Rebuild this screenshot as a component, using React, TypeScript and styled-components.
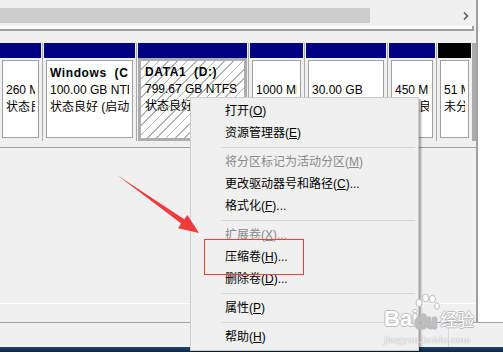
import React from "react";
import styled, { createGlobalStyle } from "styled-components";

const Global = createGlobalStyle`
  html, body { margin: 0; padding: 0; background: #f0f0f0; overflow: hidden; }
  body {
    font-family: "Liberation Sans", "Noto Sans CJK SC", sans-serif;
    font-size: 12px;
    color: #000;
  }
  * { box-sizing: border-box; }
`;

const Screen = styled.div`
  position: relative;
  width: 503px;
  height: 352px;
  overflow: hidden;
  display: flex;
  flex-direction: column;
  background: #f0f0f0;
`;

const Workspace = styled.div`
  display: flex;
  height: 322px;
`;

const DiskPane = styled.div`
  width: 476px;
  display: flex;
  flex-direction: column;
`;

const PaneDivider = styled.div`
  width: 2px;
  background: #a0a0a0;
`;

const WhitePane = styled.div`
  flex: 1;
  background: #ffffff;
`;

const ScrollTrack = styled.div`
  height: 26px;
  display: flex;
  align-items: flex-start;
  padding-top: 8px;
  background: #f0f0f0;
`;

const Thumb = styled.div`
  width: 370px;
  height: 15px;
  background: #cdcdcd;
`;

const Spacer = styled.div`
  flex: 1;
`;

const ArrowBox = styled.div`
  width: 6px;
  height: 8px;
  margin-top: 4px;
  margin-right: 7px;
  display: flex;
`;

const FrameEdge = styled.div`
  height: 5px;
  margin-right: 2px;
  background: #fafafa;
  border-bottom: 2px solid #a0a0a0;
  border-right: 2px solid #a0a0a0;
`;

const TopGap = styled.div`
  height: 12px;
`;

const PartitionRow = styled.div`
  display: flex;
  gap: 1px;
  height: 98px;
  margin-left: -1px;
  background: #ababab;
`;

const Partition = styled.div<{ $w: number }>`
  width: ${(p) => p.$w}px;
  display: flex;
  flex-direction: column;
  border-left: 1px solid #f0f0f0;
  border-right: 1px solid #f0f0f0;
  background: #f0f0f0;
`;

const PartHead = styled.div<{ $color: string }>`
  height: 15px;
  background: ${(p) => p.$color};
`;

const PartBody = styled.div<{ $selected?: boolean }>`
  flex: 1;
  display: flex;
  min-width: 0;
  padding: ${(p) => (p.$selected ? "0" : "2px 2px 3px 2px")};
  background: #f0f0f0;
`;

const PartBox = styled.div<{ $selected?: boolean }>`
  flex: 1;
  min-width: 0;
  overflow: hidden;
  background: ${(p) =>
    p.$selected
      ? "repeating-linear-gradient(135deg, #ffffff 0 5.5px, #b4b4b4 5.5px 6.6px)"
      : "#ffffff"};
  border: ${(p) => (p.$selected ? "3px solid #adadad" : "1px solid #a0a0a0")};
  padding: ${(p) => (p.$selected ? "3px 4px" : "4px 3px")};
`;

const PartLine = styled.div<{ $bold?: boolean }>`
  height: 17px;
  line-height: 17px;
  white-space: pre;
  overflow: hidden;
  font-weight: ${(p) => (p.$bold ? 700 : 400)};
  letter-spacing: ${(p) => (p.$bold ? "0.6px" : "0")};
`;

const LowerPane = styled.div`
  margin-top: 6px;
  flex: 1;
  border-top: 1px solid #a0a0a0;
  border-bottom: 1px solid #ffffff;
`;

const BottomStrip = styled.div`
  height: 18px;
`;

const StatusBar = styled.div`
  height: 25px;
  display: flex;
  border-top: 1px solid #a0a0a0;
  background: #f0f0f0;
`;

const StatusCell = styled.div`
  width: 449px;
  border-right: 1px solid #d6d6d6;
`;

const Taskbar = styled.div`
  height: 5px;
  background: linear-gradient(#1d4674, #0c2544);
`;

const Menu = styled.div`
  position: absolute;
  left: 190px;
  top: 97px;
  width: 229px;
  padding: 2px;
  background: #f0f0f0;
  border: 1px solid #cccccc;
  box-shadow: 2px 2px 2px rgba(0, 0, 0, 0.35);
`;

const MenuItem = styled.div<{ $disabled?: boolean }>`
  height: 22px;
  line-height: 22px;
  padding-left: 32px;
  color: ${(p) => (p.$disabled ? "#8a8a8a" : "#000")};
  white-space: nowrap;
  u { text-underline-offset: 1px; }
`;

const MenuSep = styled.div`
  height: 1px;
  margin: 3px 1px 3px 28px;
  background: #d7d7d7;
`;

const Highlight = styled.div`
  position: absolute;
  left: 204px;
  top: 239px;
  width: 100px;
  height: 36px;
  border: 1px solid #f03c3c;
  pointer-events: none;
`;

const PointerArrow = styled.svg`
  position: absolute;
  left: 0;
  top: 0;
  pointer-events: none;
`;

const Watermark = styled.div`
  position: absolute;
  left: 384px;
  top: 288px;
  display: flex;
  flex-direction: column;
  align-items: flex-start;
  white-space: nowrap;
  color: #ffffff;
  text-shadow: 1px 0 0 #bdbdbd, -1px 0 0 #bdbdbd, 0 1px 0 #bdbdbd, 0 -1px 0 #bdbdbd;
  pointer-events: none;
`;

const MarkRow = styled.div`
  display: flex;
  align-items: flex-end;
  height: 44px;
`;

const MarkBig = styled.span`
  font-family: "Liberation Sans", sans-serif;
  font-size: 22px;
  font-weight: 700;
  line-height: 26px;
`;

const Paw = styled.svg`
  margin-left: -4px;
  flex: none;
`;

const MarkCn = styled.span`
  font-family: "Noto Sans CJK SC", sans-serif;
  font-size: 17px;
  line-height: 26px;
`;

const MarkUrl = styled.span`
  font-family: "Liberation Serif", serif;
  font-size: 11px;
  line-height: 13px;
  letter-spacing: 0.3px;
  margin-top: 1px;
  text-shadow: 0 0 1px #a8a8a8, 0 0 1px #a8a8a8;
`;

type Part = { w: number; color: string; lines: string[]; selected?: boolean; bold?: boolean };

const parts: Part[] = [
  { w: 43, color: "#000080", lines: ["", "260 MB", "状态良好 (EFI 系统分区)"] },
  { w: 93, color: "#000080", lines: ["Windows  (C:)", "100.00 GB NTFS", "状态良好 (启动, 页面文件)"], bold: true },
  { w: 111, color: "#000080", lines: ["DATA1  (D:)", "799.67 GB NTFS", "状态良好 (主分区)"], bold: true, selected: true },
  { w: 55, color: "#000080", lines: ["", "1000 MB", "状态良好 (恢复分区)"] },
  { w: 82, color: "#000080", lines: ["", "30.00 GB", "状态良好 (主分区)"] },
  { w: 48, color: "#000080", lines: ["", "450 MB", "状态良好 (恢复分区)"] },
  { w: 35, color: "#000000", lines: ["", "51 MB", "未分配"] },
];

type Item = { label: string; key: string; tail?: string; disabled?: boolean } | "sep";

const items: Item[] = [
  { label: "打开", key: "O" },
  { label: "资源管理器", key: "E" },
  "sep",
  { label: "将分区标记为活动分区", key: "M", disabled: true },
  { label: "更改驱动器号和路径", key: "C", tail: "..." },
  { label: "格式化", key: "F", tail: "..." },
  "sep",
  { label: "扩展卷", key: "X", tail: "...", disabled: true },
  { label: "压缩卷", key: "H", tail: "..." },
  { label: "删除卷", key: "D", tail: "..." },
  "sep",
  { label: "属性", key: "P" },
  "sep",
  { label: "帮助", key: "H" },
];

export default function App() {
  return (
    <>
      <Global />
      <Screen>
        <Workspace>
          <DiskPane>
            <ScrollTrack>
              <Thumb />
              <Spacer />
              <ArrowBox>
                <svg width="6" height="8" viewBox="0 0 6 8">
                  <path d="M1 0.5 L4.5 4 L1 7.5" fill="none" stroke="#606060" strokeWidth="1.6" />
                </svg>
              </ArrowBox>
            </ScrollTrack>
            <FrameEdge />
            <TopGap />
            <PartitionRow>
              {parts.map((p, i) => (
                <Partition key={i} $w={p.w}>
                  <PartHead $color={p.color} />
                  <PartBody $selected={p.selected}>
                    <PartBox $selected={p.selected}>
                      {p.lines.map((l, j) => (
                        <PartLine key={j} $bold={p.bold && j === 0}>
                          {l}
                        </PartLine>
                      ))}
                    </PartBox>
                  </PartBody>
                </Partition>
              ))}
            </PartitionRow>
            <LowerPane />
            <BottomStrip />
          </DiskPane>
          <PaneDivider />
          <WhitePane />
        </Workspace>
        <StatusBar>
          <StatusCell />
        </StatusBar>
        <Taskbar />

        <Menu>
          {items.map((it, i) =>
            it === "sep" ? (
              <MenuSep key={i} />
            ) : (
              <MenuItem key={i} $disabled={it.disabled}>
                {it.label}(<u>{it.key}</u>){it.tail ?? ""}
              </MenuItem>
            )
          )}
        </Menu>

        <Highlight />

        <PointerArrow width="503" height="352" viewBox="0 0 503 352">
          <polygon
            points="117,175 184.3,219.3 187.5,215 199,233 178,228.2 181.2,223.6"
            fill="#f23b3b"
          />
        </PointerArrow>

        <Watermark>
          <MarkRow>
            <MarkBig>Bai</MarkBig>
            <Paw width="26" height="40" viewBox="0 0 26 40">
              <g fill="#ffffff" stroke="#bdbdbd" strokeWidth="1">
                <ellipse cx="5" cy="11" rx="3" ry="3.8" />
                <ellipse cx="11.5" cy="6" rx="3" ry="3.8" />
                <ellipse cx="18.5" cy="7" rx="3" ry="3.8" />
                <ellipse cx="23" cy="14" rx="2.4" ry="3.2" />
              </g>
              <text x="1" y="36" fontFamily="Liberation Sans, sans-serif" fontSize="18" fontWeight="700" fill="#ffffff" stroke="#bdbdbd" strokeWidth="1">du</text>
            </Paw>
            <MarkCn>经验</MarkCn>
          </MarkRow>
          <MarkUrl>jingyan.baidu.com</MarkUrl>
        </Watermark>
      </Screen>
    </>
  );
}
